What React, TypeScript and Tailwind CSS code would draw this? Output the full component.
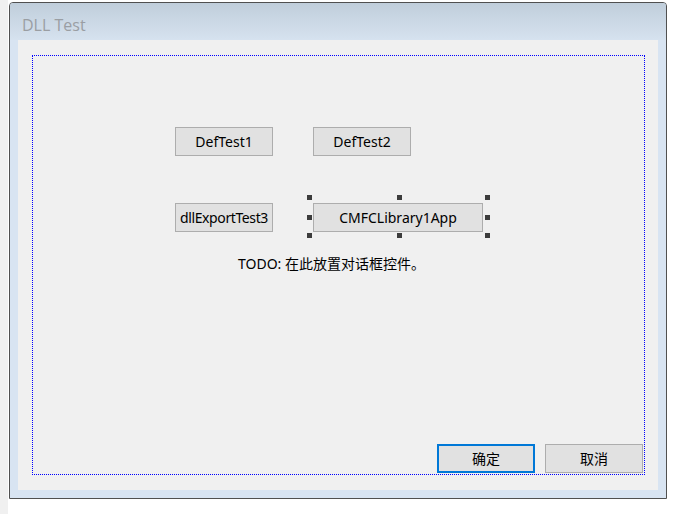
import React from "react";

const font = { fontFamily: '"Segoe UI", "Noto Sans", "Noto Sans CJK SC", sans-serif' };

function Btn({ label, className, border = "border border-[#adadad]" }: { label: string; className: string; border?: string }) {
  return (
    <div
      className={
        "flex items-center justify-center bg-[#e1e1e1] h-[29px] text-[14px] text-black whitespace-nowrap shrink-0 " +
        border +
        " " +
        className
      }
    >
      {label}
    </div>
  );
}

function Handle({ className }: { className: string }) {
  return <div className={"absolute w-[5px] h-[5px] bg-[#3c3c3c] " + className} />;
}

export default function App() {
  return (
    <div className="w-[680px] h-[514px] bg-white flex" style={font}>
      <div className="w-[8px] h-full bg-[#f0f0f0]" />
      <div className="pl-[1px] pt-[2px]">
        <div className="w-[658px] h-[497px] border border-[#505050] rounded-t-[4px] bg-[#d8e4f2] flex flex-col">
          <div className="h-[37px] shrink-0 bg-gradient-to-b from-[#c0cedb] to-[#d6e2ef] rounded-t-[3px] flex items-center pl-[12px] pt-[6px]">
            <span
              className="text-[16px] text-[#9a9ea3]"
              style={{ fontFamily: '"Open Sans", "Noto Sans", sans-serif' }}
            >
              DLL Test
            </span>
          </div>
          <div className="px-[8px] pb-[8px] flex-1 flex">
            <div className="w-[640px] h-[450px] bg-[#f0f0f0] pl-[14px] pt-[15px]">
              <div className="w-[613px] h-[420px] border border-dotted border-[#0000ff] flex flex-col">
                <div className="flex gap-[40px] pl-[142px] pt-[71px]">
                  <Btn label="DefTest1" className="w-[98px]" />
                  <Btn label="DefTest2" className="w-[98px]" />
                </div>
                <div className="flex gap-[40px] pl-[142px] pt-[47px]">
                  <Btn label="dllExportTest3" className="w-[98px] tracking-[-0.4px]" />
                  <div className="relative">
                    <Btn label="CMFCLibrary1App" className="w-[170px]" />
                    <Handle className="left-[-6px] top-[-8px]" />
                    <Handle className="left-[84px] top-[-8px]" />
                    <Handle className="left-[172px] top-[-8px]" />
                    <Handle className="left-[-6px] top-[12px]" />
                    <Handle className="left-[172px] top-[12px]" />
                    <Handle className="left-[-6px] top-[30px]" />
                    <Handle className="left-[84px] top-[30px]" />
                    <Handle className="left-[172px] top-[30px]" />
                  </div>
                </div>
                <div className="pl-[205px] pt-[21px] text-[14px] text-black whitespace-nowrap">
                  TODO: 在此放置对话框控件。
                </div>
                <div className="mt-auto flex justify-end gap-[10px] pr-[1px] mb-[1px]">
                  <Btn label="确定" className="w-[98px]" border="border-2 border-[#0078d7]" />
                  <Btn label="取消" className="w-[98px]" />
                </div>
              </div>
            </div>
          </div>
        </div>
      </div>
    </div>
  );
}
